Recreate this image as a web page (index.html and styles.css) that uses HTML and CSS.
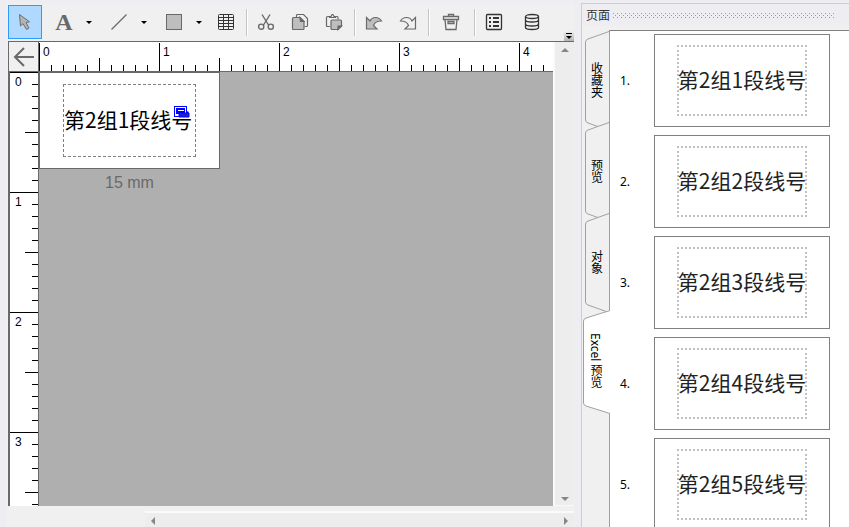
FILE: index.html
```html
<!DOCTYPE html>
<html lang="zh-CN">
<head>
    <meta charset="UTF-8">
    <meta name="viewport" content="width=device-width, initial-scale=1.0">
    <title>标签编辑</title>
    <link rel="stylesheet" href="styles.css">
</head>
<body>
    <main class="editor">
        <div class="toolbar">
            <button class="tool active" aria-label="选择">
                <svg width="18" height="18" viewBox="0 0 18 18"><path d="M3.500 1.500 L4.500 13 L7 10.600 L10.500 16.500 L13 15 L10 9.600 L13.500 8.800 Z" fill="#b4b4b4" stroke="#6e6e6e"/></svg>
            </button>
            <div class="tool-group">
                <button class="tool letter" aria-label="文字">A</button>
                <button class="drop" aria-label="文字选项"></button>
            </div>
            <div class="tool-group">
                <button class="tool" aria-label="线条">
                    <svg width="18" height="18" viewBox="0 0 18 18"><path d="M1.5 16.5 L16.5 1.5" stroke="#696969" stroke-width="1.3"/></svg>
                </button>
                <button class="drop" aria-label="线条选项"></button>
            </div>
            <div class="tool-group">
                <button class="tool" aria-label="形状">
                    <svg width="18" height="18" viewBox="0 0 18 18"><rect x="1.5" y="1.5" width="15" height="15" fill="#bebebe" stroke="#696969"/></svg>
                </button>
                <button class="drop" aria-label="形状选项"></button>
            </div>
            <button class="tool table-tool" aria-label="表格">
                <svg width="18" height="18" viewBox="0 0 18 18"><g fill="none" stroke="#333"><rect x="1.5" y="1.5" width="15" height="15" rx="1"/><path d="M1.5 4.5h15M1.5 7.5h15M1.5 10.5h15M1.5 13.5h15M6.5 1.5v15M11.5 1.5v15"/></g></svg>
            </button>
            <span class="sep"></span>
            <button class="tool" aria-label="剪切">
                <svg width="18" height="18" viewBox="0 0 18 18"><g fill="none" stroke="#696969" stroke-width="1.4"><path d="M5 1.5 L11.5 12 M13 1.5 L6.5 12"/><circle cx="4.2" cy="13.7" r="2.6"/><circle cx="13.8" cy="13.7" r="2.6"/></g></svg>
            </button>
            <button class="tool" aria-label="复制">
                <svg width="18" height="18" viewBox="0 0 18 18"><g stroke="#696969" stroke-width="1.2"><path d="M5.5 4V2.5q0-1 1-1h6l4 4v7q0 1-1 1h-2" fill="none"/><path d="M2.5 4.5h6.5l4 4v7q0 1-1 1h-9.5q-1 0-1-1v-10q0-1 1-1Z" fill="#bebebe"/><path d="M9 4.5l4 4h-3.5Z" fill="#696969"/></g></svg>
            </button>
            <button class="tool" aria-label="粘贴">
                <svg width="18" height="18" viewBox="0 0 18 18"><g stroke="#696969" stroke-width="1.2"><path d="M5 13.5H2.5q-1 0-1-1v-8q0-1 1-1h2M10 3.5h2q1 0 1 1v2M4.5 4.5v-1h1.500l1-2h1l1 2h1.500v1Z" fill="none"/><path d="M7 7h8.500q1 0 1 1v5l-3.500 3.500h-6q-1 0-1-1v-7.500q0-1 1-1Z" fill="#bebebe"/><path d="M13 16.500v-3.500h3.500Z" fill="#696969"/></g></svg>
            </button>
            <span class="sep"></span>
            <button class="tool" aria-label="撤销">
                <svg width="18" height="18" viewBox="0 0 18 18"><path d="M1.5 4.5v11.500h10.500l-3.500-3.500q1.500-4.500 8-4.500q-2-3.500-6-3.500q-4 0-5.500 3.500Z" fill="#bebebe" stroke="#696969" stroke-width="1.2"/></svg>
            </button>
            <button class="tool" aria-label="重做">
                <svg width="18" height="18" viewBox="0 0 18 18"><path d="M16.5 4.5v11.500h-10.500l3.500-3.500q-1.500-4.500-8-4.500q2-3.500 6-3.500q4 0 5.500 3.500Z" fill="none" stroke="#696969" stroke-width="1.2"/></svg>
            </button>
            <span class="sep"></span>
            <button class="tool trash-tool" aria-label="删除">
                <svg width="18" height="18" viewBox="0 0 18 18"><g fill="none" stroke="#696969" stroke-width="1.3"><path d="M1.5 3.5h15v3h-15ZM6.5 3v-1.5h5v1.5M3 6.5l1 10h10l1-10M6 8.5h6v2h-6Z"/></g></svg>
            </button>
            <span class="sep"></span>
            <button class="tool" aria-label="属性">
                <svg width="18" height="18" viewBox="0 0 18 18"><rect x="1.5" y="1.5" width="15" height="15" rx="1" fill="none" stroke="#333" stroke-width="1.3"/><path d="M4 5h2M4 9h2M4 13h2M8 5h6M8 9h6M8 13h6" stroke="#333" stroke-width="2"/></svg>
            </button>
            <button class="tool data-tool" aria-label="数据库">
                <svg width="18" height="18" viewBox="0 0 18 18"><g fill="none" stroke="#333" stroke-width="1.3"><ellipse cx="9" cy="3.500" rx="6.5" ry="2"/><path d="M2.5 3.5v11q0 2 6.5 2t6.5-2v-11M2.5 7q0 2 6.5 2t6.5-2M2.5 11q0 2 6.5 2t6.5-2"/></g></svg>
            </button>
            <button class="more" aria-label="更多工具">
                <svg width="10" height="10" viewBox="0 0 10 10"><path d="M2 2.5h6" stroke="#000"/><path d="M2 5h6l-3 3Z"/></svg>
            </button>
        </div>

        <button class="back" aria-label="返回">
            <svg width="22" height="22" viewBox="0 0 22 22"><path d="M11 2 L2 11 L11 20 M2 11 H21" fill="none" stroke="#696969" stroke-width="2"/></svg>
        </button>
        <div class="ruler ruler-x"><span>0</span><span>1</span><span>2</span><span>3</span><span>4</span></div>
        <div class="scroll scroll-y">
            <button class="arrow up" aria-label="向上滚动"></button>
            <button class="arrow down" aria-label="向下滚动"></button>
        </div>
        <div class="ruler ruler-y"><span>0</span><span>1</span><span>2</span><span>3</span></div>
        <section class="canvas">
            <div class="label">
                <div class="label-text">第2组1段线号
                    <svg class="link-mark" width="16" height="13" viewBox="0 0 16 13"><rect x="0.5" y="0.5" width="12" height="10" fill="#fff" stroke="#00f"/><rect x="2.5" y="2.5" width="8" height="5" fill="#00f" stroke="#00f"/><path d="M4 4.5h6" stroke="#fff"/><path d="M5 7h10v4h-10Z" fill="#22c" stroke="#00f"/></svg>
                </div>
            </div>
            <p class="label-size">15 mm</p>
        </section>
        <div class="scroll scroll-x">
            <button class="arrow left" aria-label="向左滚动"></button>
            <button class="arrow right" aria-label="向右滚动"></button>
        </div>
    </main>

    <aside class="panel">
        <header class="panel-title"><h2>页面</h2><span class="grip"></span></header>
        <div class="panel-body">
            <nav class="tabs">
                <button class="tab">
                    <svg viewBox="0 0 24 100" preserveAspectRatio="none"><path d="M24 0.5 L3 8 Q0.5 9 0.5 11 V89 Q0.5 91 3 92 L24 99.5"/></svg>
                    <span>收藏夹</span>
                </button>
                <button class="tab">
                    <svg viewBox="0 0 24 100" preserveAspectRatio="none"><path d="M24 0.5 L3 8 Q0.5 9 0.5 11 V89 Q0.5 91 3 92 L24 99.5"/></svg>
                    <span>预览</span>
                </button>
                <button class="tab">
                    <svg viewBox="0 0 24 100" preserveAspectRatio="none"><path d="M24 0.5 L3 8 Q0.5 9 0.5 11 V89 Q0.5 91 3 92 L24 99.5"/></svg>
                    <span>对象</span>
                </button>
                <button class="tab active">
                    <svg viewBox="0 0 27 104" preserveAspectRatio="none"><path d="M27 0.5 L3 8 Q0.5 9 0.5 11 V93 Q0.5 95 3 96 L27 103.5"/></svg>
                    <span>Excel 预览</span>
                </button>
            </nav>
            <ol class="pages">
                <li><span class="num">1.</span><div class="thumb"><div class="thumb-text">第2组1段线号</div></div></li>
                <li><span class="num">2.</span><div class="thumb"><div class="thumb-text">第2组2段线号</div></div></li>
                <li><span class="num">3.</span><div class="thumb"><div class="thumb-text">第2组3段线号</div></div></li>
                <li><span class="num">4.</span><div class="thumb"><div class="thumb-text">第2组4段线号</div></div></li>
                <li><span class="num">5.</span><div class="thumb"><div class="thumb-text">第2组5段线号</div></div></li>
            </ol>
        </div>
    </aside>
</body>
</html>
```
FILE: styles.css
```css
* {
    margin: 0;
    padding: 0;
    box-sizing: border-box;
}

body {
    height: 100vh;
    overflow: hidden;
    display: flex;
    gap: 7px;
    padding: 3px 0 0 6px;
    background-color: #ededf2;
    font-family: "Noto Sans", "Noto Sans CJK SC", sans-serif;
    font-size: 12px;
    color: #000;
}

button {
    border: none;
    background: none;
    font: inherit;
    color: inherit;
}

svg {
    display: block;
}

/* 编辑区 */
.editor {
    flex: 1;
    min-width: 0;
    display: grid;
    grid-template-columns: 31px minmax(0, 1fr) 21px;
    grid-template-rows: 39px 30px minmax(0, 1fr) 21px;
    padding-left: 2px;
    background-color: #f0f0f0;
}

.toolbar {
    grid-column: 1 / -1;
    display: flex;
    align-items: center;
    border-bottom: 1px solid #696969;
}

.tool {
    width: 34px;
    height: 34px;
    display: flex;
    align-items: center;
    justify-content: center;
}

.tool.active {
    background-color: #b0d9ff;
    border: 1px solid #3399ff;
}

.letter {
    font: bold 24px "Liberation Serif", serif;
    color: #696969;
}

.tool-group {
    display: flex;
    align-items: center;
    margin-left: 5px;
}

.drop {
    width: 16px;
    height: 34px;
    display: flex;
    align-items: center;
    justify-content: center;
}

.drop::before {
    content: "";
    border: 3px solid transparent;
    border-top-color: #000;
    border-bottom: none;
}

.table-tool {
    margin-left: 2px;
}

.trash-tool {
    margin: 0 3px;
}

.data-tool {
    margin-left: 4px;
}

.sep {
    width: 2px;
    height: 27px;
    margin: 0 1px 0 3px;
    background-color: #fff;
    border-left: 1px solid #c4c4c4;
}

.more {
    align-self: flex-end;
    margin-left: auto;
    background: linear-gradient(#f0f0f0, #b4b4b4);
}

.back {
    display: flex;
    align-items: center;
    justify-content: center;
    border-left: 1px solid #696969;
    border-right: 1px solid #696969;
    border-bottom: 1px solid #696969;
}

/* 标尺：每小格 12px，每大格 120px */
.ruler {
    display: flex;
    overflow: hidden;
    background-color: #fff;
    font: 12px/14px "Liberation Sans", Arial, sans-serif;
}

.ruler span {
    flex: none;
}

.ruler-x {
    border-top: 1px solid #fff;
    border-bottom: 1px solid #696969;
    background-image:
        repeating-linear-gradient(90deg, #000 0 1px, transparent 1px 120px),
        repeating-linear-gradient(90deg, #000 0 1px, transparent 1px 60px),
        repeating-linear-gradient(90deg, #000 0 1px, transparent 1px 12px);
    background-size: 100% 100%, 100% 13px, 100% 6px;
    background-position: left bottom;
    background-repeat: no-repeat;
}

.ruler-x span {
    width: 120px;
    padding: 2px 0 0 4px;
}

.ruler-y {
    flex-direction: column;
    border-left: 2px solid #696969;
    border-right: 1px solid #696969;
    background-image:
        repeating-linear-gradient(#000 0 1px, transparent 1px 120px),
        repeating-linear-gradient(#000 0 1px, transparent 1px 60px),
        repeating-linear-gradient(#000 0 1px, transparent 1px 12px);
    background-size: 100% 100%, 13px 100%, 6px 100%;
    background-position: right top;
    background-repeat: no-repeat;
}

.ruler-y span {
    height: 120px;
    padding: 3px 0 0 5px;
}

.canvas {
    overflow: hidden;
    background-color: #afafaf;
}

.label {
    width: 181px;
    height: 97px;
    padding: 11px 23px;
    background-color: #fff;
    border: 1px solid #696969;
}

.label-text {
    position: relative;
    height: 73px;
    border: 1px dashed #808080;
    font: 21px/69px "Noto Sans CJK SC", sans-serif;
    white-space: nowrap;
}

.link-mark {
    position: absolute;
    top: 21px;
    left: 110px;
}

.label-size {
    width: 181px;
    padding-top: 5px;
    text-align: center;
    font: 16px/18px "Liberation Sans", Arial, sans-serif;
    color: #696969;
}

/* 滚动条 */
.scroll {
    display: flex;
    justify-content: space-between;
    background-color: #ededed;
}

.scroll-y {
    grid-row: 2 / 4;
    grid-column: 3;
    flex-direction: column;
    align-items: center;
    padding-top: 2px;
    border-left: 2px solid #fafafa;
    border-bottom: 1px solid #fafafa;
}

.scroll-x {
    grid-column: 1 / -1;
    margin: 5px 0 0 137px;
    border-top: 2px solid #fafafa;
}

.arrow {
    width: 16px;
    height: 16px;
    display: flex;
    align-items: center;
    justify-content: center;
}

.scroll-y .arrow {
    height: 12px;
}

.arrow::before {
    content: "";
    border: 4px solid transparent;
}

.up::before {
    border-top: none;
    border-bottom-color: #868686;
}

.down::before {
    border-bottom: none;
    border-top-color: #868686;
}

.left::before {
    border-left: none;
    border-right-color: #868686;
}

.right::before {
    border-right: none;
    border-left-color: #868686;
}

/* 页面面板 */
.panel {
    flex: 0 0 268px;
    min-width: 0;
    display: flex;
    flex-direction: column;
    border-top: 1px solid #ccccdc;
    border-left: 1px solid #ccccdc;
    background-color: #f0f0f0;
}

.panel-title {
    display: flex;
    align-items: center;
    gap: 3px;
    height: 22px;
    padding: 0 14px 0 4px;
    background-color: #ededf2;
}

.panel-title h2 {
    font-size: 12px;
    font-weight: normal;
    color: #333;
}

.grip {
    flex: 1;
    height: 5px;
    background-image:
        radial-gradient(circle at 0.5px 0.5px, #999 0 1px, transparent 1px),
        radial-gradient(circle at 0.5px 0.5px, #999 0 1px, transparent 1px);
    background-size: 4px 4px;
    background-position: 0 0, 2px 2px;
}

.panel-body {
    flex: 1;
    min-height: 0;
    display: flex;
    padding-top: 4px;
}

.tabs {
    flex: 0 0 27px;
    display: flex;
    flex-direction: column;
    align-items: flex-end;
    padding-top: 1px;
}

.tab {
    position: relative;
    z-index: 1;
    flex: none;
    width: 24px;
    height: 100px;
    margin-bottom: -9px;
    padding: 0 3px 2px 0;
    display: flex;
    align-items: center;
    justify-content: center;
    writing-mode: vertical-rl;
    line-height: 16px;
}

.tab svg {
    position: absolute;
    inset: 0;
    width: 100%;
    height: 100%;
    z-index: -1;
}

.tab path {
    fill: #f0f0f0;
    stroke: #a0a0a0;
}

.tab.active {
    z-index: 2;
    width: 27px;
    height: 104px;
    margin-top: 6px;
    margin-right: -1px;
}

.tab.active path {
    fill: #fff;
}

.pages {
    flex: 1;
    min-width: 0;
    display: flex;
    flex-direction: column;
    gap: 8px;
    overflow: hidden;
    padding: 3px 19px 0 10px;
    background-color: #fff;
    border-top: 1px solid #808080;
    border-left: 1px solid #a0a0a0;
    list-style: none;
}

.pages li {
    display: flex;
    align-items: center;
}

.num {
    flex: none;
    width: 34px;
}

.thumb {
    flex: 1;
    min-width: 0;
    padding: 10px 22px;
    border: 1px solid #808080;
}

.thumb-text {
    display: flex;
    justify-content: center;
    height: 71px;
    border: 2px dotted #c0c0c0;
    font: 21px/65px "Noto Sans CJK SC", sans-serif;
    color: #222;
    white-space: nowrap;
}
```
